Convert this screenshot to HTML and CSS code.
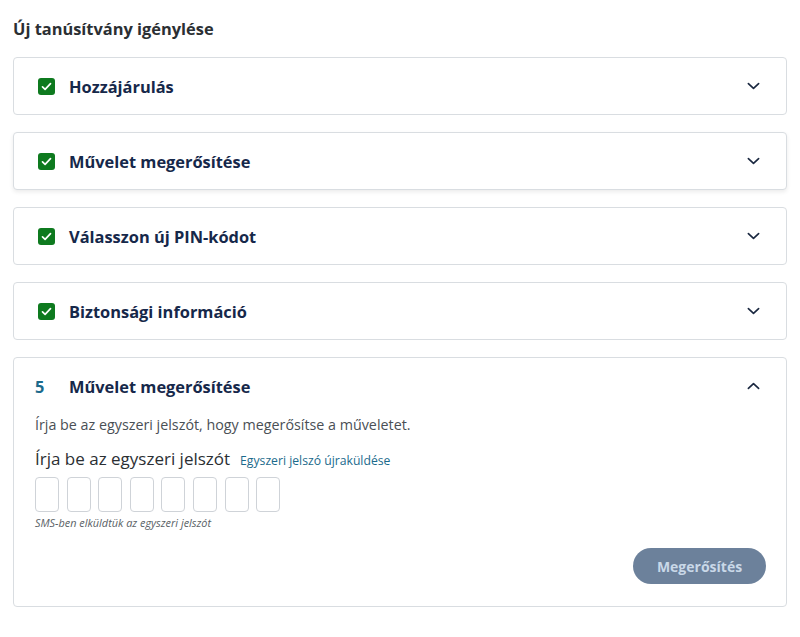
FILE: index.html
```html
<!DOCTYPE html>
<html>
  <head>
    <title>Új tanúsítvány igénylése</title>
    <link rel="stylesheet" href="styles.css">
  </head>
  <body>
    <div class="page">
      <h1>Új tanúsítvány igénylése</h1>

      <div class="step">
        <div class="step-head">
          <svg class="check" viewBox="0 0 17 17"><rect width="17" height="17" rx="3" fill="#0e7a1f"/><path d="M4.5 8.8l2.6 2.5 5.4-5.6" fill="none" stroke="#fff" stroke-width="1.7" stroke-linecap="round" stroke-linejoin="round"/></svg>
          <span class="step-title">Hozzájárulás</span>
          <svg class="chevron" viewBox="0 0 14 8"><path d="M1.5 1.5l5.5 5 5.5-5" fill="none" stroke="#1a2840" stroke-width="1.8" stroke-linecap="round" stroke-linejoin="round"/></svg>
        </div>
      </div>

      <div class="step raised">
        <div class="step-head">
          <svg class="check" viewBox="0 0 17 17"><rect width="17" height="17" rx="3" fill="#0e7a1f"/><path d="M4.5 8.8l2.6 2.5 5.4-5.6" fill="none" stroke="#fff" stroke-width="1.7" stroke-linecap="round" stroke-linejoin="round"/></svg>
          <span class="step-title">Művelet megerősítése</span>
          <svg class="chevron" viewBox="0 0 14 8"><path d="M1.5 1.5l5.5 5 5.5-5" fill="none" stroke="#1a2840" stroke-width="1.8" stroke-linecap="round" stroke-linejoin="round"/></svg>
        </div>
      </div>

      <div class="step">
        <div class="step-head">
          <svg class="check" viewBox="0 0 17 17"><rect width="17" height="17" rx="3" fill="#0e7a1f"/><path d="M4.5 8.8l2.6 2.5 5.4-5.6" fill="none" stroke="#fff" stroke-width="1.7" stroke-linecap="round" stroke-linejoin="round"/></svg>
          <span class="step-title">Válasszon új PIN-kódot</span>
          <svg class="chevron" viewBox="0 0 14 8"><path d="M1.5 1.5l5.5 5 5.5-5" fill="none" stroke="#1a2840" stroke-width="1.8" stroke-linecap="round" stroke-linejoin="round"/></svg>
        </div>
      </div>

      <div class="step">
        <div class="step-head">
          <svg class="check" viewBox="0 0 17 17"><rect width="17" height="17" rx="3" fill="#0e7a1f"/><path d="M4.5 8.8l2.6 2.5 5.4-5.6" fill="none" stroke="#fff" stroke-width="1.7" stroke-linecap="round" stroke-linejoin="round"/></svg>
          <span class="step-title">Biztonsági információ</span>
          <svg class="chevron" viewBox="0 0 14 8"><path d="M1.5 1.5l5.5 5 5.5-5" fill="none" stroke="#1a2840" stroke-width="1.8" stroke-linecap="round" stroke-linejoin="round"/></svg>
        </div>
      </div>

      <div class="step open">
        <div class="step-head">
          <span class="step-num">5</span>
          <span class="step-title">Művelet megerősítése</span>
          <svg class="chevron" viewBox="0 0 14 8"><path d="M1.5 6.5l5.5-5 5.5 5" fill="none" stroke="#1a2840" stroke-width="1.8" stroke-linecap="round" stroke-linejoin="round"/></svg>
        </div>
        <div class="step-body">
          <p class="desc">Írja be az egyszeri jelszót, hogy megerősítse a műveletet.</p>
          <div class="otp-label">
            <span>Írja be az egyszeri jelszót</span>
            <a href="#" class="resend">Egyszeri jelszó újraküldése</a>
          </div>
          <div class="otp">
            <input type="text" maxlength="1">
            <input type="text" maxlength="1">
            <input type="text" maxlength="1">
            <input type="text" maxlength="1">
            <input type="text" maxlength="1">
            <input type="text" maxlength="1">
            <input type="text" maxlength="1">
            <input type="text" maxlength="1">
          </div>
          <p class="hint">SMS-ben elküldtük az egyszeri jelszót</p>
          <div class="actions">
            <button disabled>Megerősítés</button>
          </div>
        </div>
      </div>
    </div>
  </body>
</html>
```

FILE: styles.css
```css
body {
  font-family: "Open Sans", Arial, sans-serif;
  background-color: #ffffff;
  margin: 0;
  padding: 0;
}

.page {
  padding: 17px 13px 0 13px;
}

h1 {
  margin: 0 0 16px 0;
  font-size: 16.4px;
  line-height: 24px;
  font-weight: 700;
  color: #2b2f33;
}

.step {
  border: 1px solid #d9dde1;
  border-radius: 4px;
  background-color: #ffffff;
  margin-bottom: 17px;
}

.step.raised {
  box-shadow: 0 2px 4px rgba(0, 0, 0, 0.08);
}

.step-head {
  display: flex;
  align-items: center;
  height: 56px;
  padding: 0 26px 0 24px;
}

.check {
  width: 17px;
  height: 17px;
  margin-right: 14px;
  flex-shrink: 0;
}

.step-num {
  width: 20px;
  margin-left: -3px;
  margin-right: 14px;
  font-size: 16.4px;
  font-weight: 700;
  color: #1b6a8c;
}

.step-title {
  flex: 1;
  font-size: 16.4px;
  font-weight: 700;
  color: #16284a;
}

.chevron {
  width: 13px;
  height: 8px;
}

.step-body {
  padding: 0 20px 22px 21px;
}

.desc {
  margin: 0;
  font-size: 14.3px;
  line-height: 22px;
  color: #4a4f55;
}

.otp-label {
  display: flex;
  align-items: baseline;
  gap: 10px;
  margin-top: 12px;
}

.otp-label span {
  font-size: 17px;
  line-height: 22px;
  color: #2b2f33;
}

.resend {
  font-size: 12.2px;
  color: #1b6a8c;
  text-decoration: none;
}

.otp {
  display: flex;
  gap: 7.6px;
  margin-top: 7px;
}

.otp input {
  width: 24px;
  height: 35px;
  padding: 0;
  border: 1px solid #cfd3d8;
  border-radius: 4px;
  box-sizing: border-box;
  text-align: center;
}

.hint {
  margin: 4px 0 0 0;
  font-size: 10.9px;
  font-style: italic;
  line-height: 14px;
  color: #5a5f66;
}

.actions {
  display: flex;
  justify-content: flex-end;
  margin-top: 18px;
}

button {
  width: 133px;
  height: 36px;
  border: none;
  border-radius: 18px;
  background-color: #6c819b;
  color: #c9d8e8;
  font-family: "Open Sans", Arial, sans-serif;
  font-size: 14px;
  font-weight: 700;
}
```
